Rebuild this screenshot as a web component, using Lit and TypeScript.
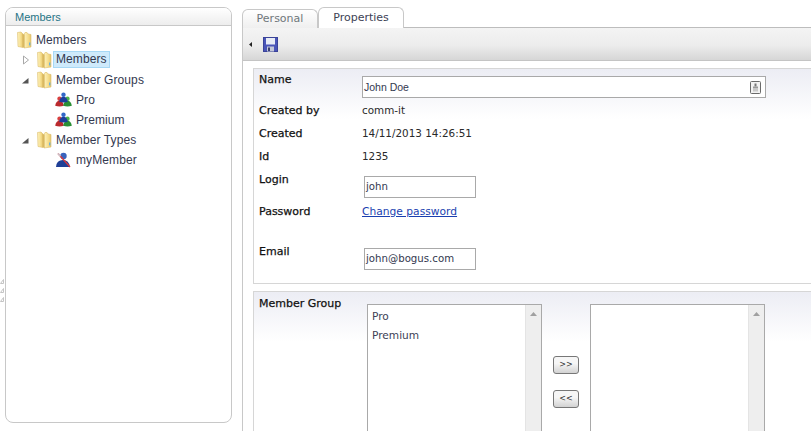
import { LitElement, html, css, svg } from "lit";
import { customElement } from "lit/decorators.js";

const folder = html`<svg class="ico" width="16" height="18" viewBox="0 0 16 18">
  <defs><linearGradient id="fg" x1="0" x2="1" y1="0" y2="0"><stop offset="0" stop-color="#fff3c0"/><stop offset=".6" stop-color="#f5dd8c"/><stop offset="1" stop-color="#e6c56c"/></linearGradient></defs>
  <path d="M0.5 1.5 L4 1 L6 3 L6 16.5 L1 15.5 Z" fill="url(#fg)" stroke="#dcbc6c" stroke-width=".6"/>
  <path d="M7 3 L8 1.5 L10 1.5 L11 3 L14 3.5 L14 16 L7 17 Z" fill="url(#fg)" stroke="#dcbc6c" stroke-width=".6"/>
  <path d="M5.5 3 L7.5 3.5 L7.5 17 L5.5 16 Z" fill="#d9b860"/>
  <rect x="12" y="11.5" width="1.4" height="3" fill="#6fb3d8"/>
</svg>`;

const person = (c: string, d: string, x: number, y: number) => svg`
  <path d="M${x - 4.3} ${y + 7} Q${x - 3.5} ${y + 2} ${x} ${y + 2} Q${x + 3.5} ${y + 2} ${x + 4.3} ${y + 7} Q${x} ${y + 8.5} ${x - 4.3} ${y + 7} Z" fill=${d}/>
  <circle cx=${x} cy=${y} r="2.2" fill=${c}/>`;

const group = html`<svg class="ico" width="17" height="16" viewBox="0 0 17 16">
  ${person("#d9403f", "#bb2a2e", 4.5, 6.8)}
  ${person("#4bb34b", "#2a8f35", 12.5, 6.8)}
  ${person("#3267c8", "#1c3f9c", 8.5, 2.8)}
</svg>`;

const user = html`<svg class="ico" width="17" height="16" viewBox="0 0 17 16">
  <circle cx="8.5" cy="4" r="3.2" fill="#3a64bd"/>
  <path d="M1 15 Q1.5 8 8 8 Q14 8 15 15 Z" fill="#1f3f96"/>
  <path d="M3 1.5 L15 15" stroke="#d8363a" stroke-width="1.3"/>
  <path d="M3 1.5 L5.5 4.3" stroke="#c9ccd4" stroke-width="1.3"/>
</svg>`;

const arrowOpen = html`<svg class="tw" width="9" height="9" viewBox="0 0 9 9"><path d="M1 7.5 L7.5 7.5 L7.5 2 Z" fill="#555"/></svg>`;
const arrowClosed = html`<svg class="tw" width="9" height="10" viewBox="0 0 9 10"><path d="M2.5 1 L7.5 5 L2.5 9 Z" fill="#fff" stroke="#a8a8a8"/></svg>`;

const save = html`<svg width="15" height="15" viewBox="0 0 15 15">
  <rect x=".5" y=".5" width="14" height="14" fill="#4a55b8" stroke="#3a4398"/>
  <rect x="3" y="1" width="9" height="6.5" fill="#e8ecf6"/>
  <rect x="4" y="9.5" width="7" height="5" fill="#c4c8d8"/>
  <rect x="5" y="10.5" width="2" height="3.5" fill="#3a3f70"/>
</svg>`;

const scrollbar = html`<div class="sb"><svg width="7" height="4" viewBox="0 0 7 4"><path d="M0 4 L3.5 0 L7 4 Z" fill="#a0a0a0"/></svg></div>`;

const grip = html`<svg width="4" height="5" viewBox="0 0 4 5"><path d="M3.5 .5 L3.5 4.5 L.5 4.5 Z" fill="#fff" stroke="#c4c4c4"/></svg>`;

const lock = html`<svg class="lock" width="11" height="13" viewBox="0 0 11 13">
  <rect x=".5" y=".5" width="10" height="12" rx="1" fill="#f2f2f2" stroke="#6a6a6a"/>
  <rect x="4.5" y="2.5" width="2" height="3" fill="#777"/>
  <rect x="3" y="5.5" width="5" height="2" fill="#999"/>
  <rect x="3" y="8" width="5" height="2.5" fill="#c8c8c8"/>
</svg>`;

@customElement("app-root")
export class AppRoot extends LitElement {
  static styles = css`
    :host { display: flex; width: 811px; height: 431px; overflow: hidden; background: #fff; font-family: "DejaVu Sans", sans-serif; font-size: 11px; color: #222; }
    .left { width: 242px; flex: none; padding: 7px 10px 8px 5px; box-sizing: border-box; position: relative; }
    .panel { height: 100%; box-sizing: border-box; border: 1px solid #c8c8c8; border-radius: 8px; overflow: hidden; }
    .phead { height: 18px; box-sizing: border-box; padding-left: 9px; border-bottom: 1px solid #c8c8c8; background: linear-gradient(#fff, #ededed); color: #1f7486; font-family: "Liberation Sans", sans-serif; font-size: 11px; line-height: 18px; }
    .tree { padding-top: 4px; font-family: "Liberation Sans", sans-serif; font-size: 12px; letter-spacing: .1px; color: #33384f; }
    .node { display: flex; align-items: center; height: 20px; }
    .d0 { padding-left: 11px; } .d1 { padding-left: 15px; } .d2 { padding-left: 49px; }
    .d2 .lbl { margin-left: 1px; }
    .tw { width: 9px; flex: none; margin-right: 7px; }
    .ico { flex: none; }
    .lbl { padding: 0 2px; line-height: 15px; border: 1px solid transparent; }
    .sel { background: #cfeafb; border-color: #a7d8f5; margin-top: -2px; }
    .grip { position: absolute; left: 0; top: 279px; width: 4px; display: flex; flex-direction: column; gap: 4px; }
    .grip svg { display: block; }

    .right { flex: 1; min-width: 0; display: flex; flex-direction: column; }
    .tabs { height: 21px; margin-top: 7px; display: flex; align-items: flex-end; flex: none; position: relative; z-index: 1; margin-bottom: -1px; }
    .tab { box-sizing: border-box; border: 1px solid #c8c8c8; border-bottom: none; border-radius: 6px 6px 0 0; color: #6f777b; background: linear-gradient(#fff, #efefef); width: 76px; height: 19px; text-align: center; line-height: 18px; }
    .tab.on { width: 86px; height: 21px; line-height: 20px; background: #fff; color: #3d4255; }
    .body { flex: 1; border-left: 1px solid #c8c8c8; min-height: 0; display: flex; flex-direction: column; }
    .bar { flex: none; height: 34px; box-sizing: border-box; border-top: 1px solid #bdbdbd; border-bottom: 1px solid #c4c4c4; background: linear-gradient(#f4f4f4 0%, #ececec 55%, #d6d6d6 100%); display: flex; align-items: center; padding-left: 6px; gap: 11px; }
    .sec { margin-left: 10px; flex: none; box-sizing: border-box; border: 1px solid #d6d6d6; border-right: none; padding-left: 5px; background: linear-gradient(#ecedf4, #fff 50px); }
    .s1 { margin-top: 7px; height: 216px; }
    .s2 { margin-top: 7px; height: 160px; display: flex; }
    .row { display: grid; grid-template-columns: 103px 1fr; align-items: start; }
    .k { color: #111; -webkit-text-stroke: .25px #111; }
    .v { color: #2a2a2a; font-size: 10.4px; }
    .h30 { height: 30px; } .h23 { height: 23px; } .h32 { height: 32px; } .h22 { height: 22px; } .h40 { height: 32px; margin-top: 18px; }
    .h23 > *, .h22 > * { padding-top: 5px; }
    .h30 .k { padding-top: 4px; }
    .h32 .k { padding-top: 5px; }
    .h40 .k { padding-top: 5px; }
    .nameinp { margin-top: 7px; width: 404px; height: 22px; box-sizing: border-box; border: 1px solid #a9a9a9; background: #fff; display: flex; align-items: center; justify-content: space-between; padding: 0 4px 0 1px; color: #33384f; font-family: "Liberation Sans", sans-serif; font-size: 10.5px; }
    .lock { display: block; flex: none; }
    .inp { margin: 8px 0 0 2px; width: 112px; height: 22px; box-sizing: border-box; border: 1px solid #a9a9a9; background: #fff; padding-left: 1px; line-height: 20px; color: #33384f; font-size: 10.2px; }
    a { color: #1a3fb0; text-decoration: underline; font-size: 10.7px; }
    .mg { width: 108px; padding-top: 5px; color: #111; -webkit-text-stroke: .25px #111; flex: none; }
    .list { margin-top: 12px; width: 175px; height: 200px; box-sizing: border-box; border: 1px solid #a9a9a9; background: #fff; display: flex; justify-content: space-between; color: #3d4255; flex: none; font-size: 10.6px; }
    .items { padding: 2px 0 0 4px; }
    .items div { height: 19px; line-height: 19px; }
    .sb { width: 16px; background: #eee; border-left: 1px solid #e4e4e4; display: flex; justify-content: center; padding-top: 7px; box-sizing: border-box; height: 100%; }
    .sb svg { display: block; }
    .mid { width: 48px; flex: none; display: flex; flex-direction: column; align-items: center; padding-top: 64px; gap: 16px; box-sizing: border-box; }
    .btn { width: 26px; height: 18px; box-sizing: border-box; border: 1px solid #777; border-radius: 3px; background: linear-gradient(#f6f6f6 40%, #d2d2d2); font-size: 8px; text-align: center; line-height: 15px; color: #333; }
  `;

  render() {
    return html`
      <div class="left">
        <div class="grip">${grip}${grip}${grip}</div>
        <div class="panel">
          <div class="phead">Members</div>
          <div class="tree">
            <div class="node d0">${folder}<span class="lbl">Members</span></div>
            <div class="node d1">${arrowClosed}${folder}<span class="lbl sel">Members</span></div>
            <div class="node d1">${arrowOpen}${folder}<span class="lbl">Member Groups</span></div>
            <div class="node d2">${group}<span class="lbl">Pro</span></div>
            <div class="node d2">${group}<span class="lbl">Premium</span></div>
            <div class="node d1">${arrowOpen}${folder}<span class="lbl">Member Types</span></div>
            <div class="node d2">${user}<span class="lbl">myMember</span></div>
          </div>
        </div>
      </div>
      <div class="right">
        <div class="tabs">
          <div class="tab">Personal</div>
          <div class="tab on">Properties</div>
        </div>
        <div class="body">
          <div class="bar">
            <svg width="3" height="5" viewBox="0 0 3 5"><path d="M3 0 L0 2.5 L3 5 Z" fill="#222"/></svg>
            ${save}
          </div>
          <div class="sec s1">
            <div class="row h30"><div class="k">Name</div>
              <div class="nameinp"><span>John Doe</span>${lock}</div></div>
            <div class="row h23"><div class="k">Created by</div><div class="v">comm-it</div></div>
            <div class="row h23"><div class="k">Created</div><div class="v">14/11/2013 14:26:51</div></div>
            <div class="row h23"><div class="k">Id</div><div class="v">1235</div></div>
            <div class="row h32"><div class="k">Login</div><div class="inp">john</div></div>
            <div class="row h22"><div class="k">Password</div><div class="v"><a href="#">Change password</a></div></div>
            <div class="row h40"><div class="k">Email</div><div class="inp">john@bogus.com</div></div>
          </div>
          <div class="sec s2">
            <div class="mg">Member Group</div>
            <div class="list"><div class="items"><div>Pro</div><div>Premium</div></div>${scrollbar}</div>
            <div class="mid"><div class="btn">&gt;&gt;</div><div class="btn">&lt;&lt;</div></div>
            <div class="list"><div class="items"></div>${scrollbar}</div>
          </div>
        </div>
      </div>
    `;
  }
}
